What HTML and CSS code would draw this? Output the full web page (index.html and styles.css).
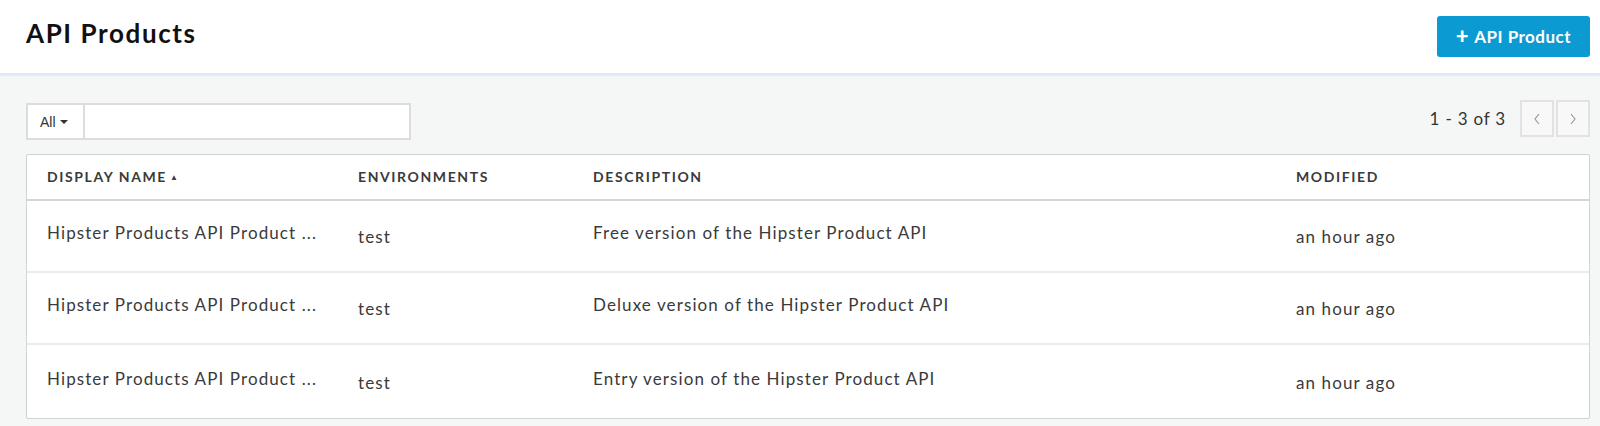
FILE: index.html
```html
<!DOCTYPE html>
<html>
<head>
<meta charset="utf-8">
<link rel="stylesheet" href="styles.css">
</head>
<body>
<header class="topbar">
  <h1 class="title">API Products</h1>
  <button class="add-btn"><span class="plus">+</span>API Product</button>
</header>
<main class="content">
  <div class="toolbar">
    <div class="filter">
      <div class="filter-select">All <span class="caret"></span></div>
      <div class="filter-input"></div>
    </div>
    <div class="pager">
      <span class="pager-text">1 - 3 of 3</span>
      <div class="pager-btns">
        <button class="pager-btn"><svg width="10" height="14" viewBox="0 0 10 14"><path d="M7 2 L3 7 L7 12" fill="none" stroke="#9a9a9a" stroke-width="1.2"/></svg></button>
        <button class="pager-btn"><svg width="10" height="14" viewBox="0 0 10 14"><path d="M3 2 L7 7 L3 12" fill="none" stroke="#9a9a9a" stroke-width="1.2"/></svg></button>
      </div>
    </div>
  </div>
  <div class="table">
    <div class="row head">
      <div class="cell">DISPLAY NAME<span class="sort">&#9650;</span></div>
      <div class="cell">ENVIRONMENTS</div>
      <div class="cell">DESCRIPTION</div>
      <div class="cell">MODIFIED</div>
    </div>
    <div class="row">
      <div class="cell">Hipster Products API Product ...</div>
      <div class="cell low">test</div>
      <div class="cell">Free version of the Hipster Product API</div>
      <div class="cell low">an hour ago</div>
    </div>
    <div class="row">
      <div class="cell">Hipster Products API Product ...</div>
      <div class="cell low">test</div>
      <div class="cell">Deluxe version of the Hipster Product API</div>
      <div class="cell low">an hour ago</div>
    </div>
    <div class="row last">
      <div class="cell">Hipster Products API Product ...</div>
      <div class="cell low">test</div>
      <div class="cell">Entry version of the Hipster Product API</div>
      <div class="cell low">an hour ago</div>
    </div>
  </div>
</main>
</body>
</html>
```
FILE: styles.css
```css
* { box-sizing: border-box; }
html, body { margin: 0; padding: 0; }
body {
  font-family: Lato, "Open Sans", sans-serif;
  color: #333;
  background: #f5f7f7;
  width: 1600px;
  height: 426px;
  overflow: hidden;
}
.topbar {
  height: 76px;
  background: #fff;
  border-bottom: 3px solid #dcebf8;
  display: flex;
  align-items: flex-start;
  justify-content: space-between;
  padding: 0 10px 0 26px;
}
.title {
  margin: 17px 0 0 0;
  font-size: 26px;
  font-weight: 700;
  letter-spacing: 1.6px;
  color: #111;
  line-height: 32px;
}
.add-btn {
  margin-top: 16px;
  width: 153px;
  height: 41px;
  border: none;
  border-radius: 3px;
  background: #0b9ad2;
  color: #fff;
  font-family: Lato, sans-serif;
  font-weight: 700;
  font-size: 17px;
  letter-spacing: 0.5px;
  padding: 0;
  display: flex;
  align-items: center;
  justify-content: center;
}
.plus { font-weight: 900; font-size: 22px; margin-right: 5px; margin-top: -3px; }
.content {
  padding: 0 10px 0 26px;
}
.toolbar {
  display: flex;
  justify-content: space-between;
  align-items: flex-start;
  height: 78px;
  padding-top: 24px;
}
.filter {
  display: flex;
  margin-top: 3px;
  height: 37px;
}
.filter-select {
  width: 59px;
  border: 2px solid #dcdcdc;
  background: #fff;
  font-family: "Liberation Sans", Arial, sans-serif;
  font-size: 14px;
  color: #333;
  display: flex;
  align-items: center;
  padding-left: 12px;
}
.caret {
  display: inline-block;
  width: 0; height: 0;
  border-left: 4px solid transparent;
  border-right: 4px solid transparent;
  border-top: 4px solid #333;
  margin-left: 4px;
}
.filter-input {
  width: 326px;
  border: 2px solid #dcdcdc;
  border-left: none;
  background: #fff;
}
.pager {
  display: flex;
  align-items: center;
  gap: 14px;
}
.pager-text {
  font-size: 17px;
  letter-spacing: 0.8px;
  color: #333;
  font-family: Lato, sans-serif;
}
.pager-btns { display: flex; gap: 2px; }
.pager-btn {
  width: 34px;
  height: 37px;
  border: 2px solid #e2e2e2;
  background: #f8f8f8;
  padding: 0;
  display: flex;
  align-items: center;
  justify-content: center;
}
.table {
  background: #fff;
  border: 1px solid #d3d3d3;
  border-radius: 2px;
  width: 1564px;
}
.row {
  display: grid;
  grid-template-columns: 311px 235px 703px 1fr;
  height: 72px;
  border-bottom: 2px solid #ebebeb;
  align-items: center;
  font-size: 17px;
  letter-spacing: 1.1px;
  color: #3a3a3a;
}
.row.last { border-bottom: none; height: 73px; }
.row.head {
  height: 46px;
  border-bottom: 2px solid #d6d6d6;
  font-size: 14px;
  font-weight: 700;
  letter-spacing: 1.6px;
  color: #3a3a3a;
}
.cell { padding-left: 20px; white-space: nowrap; }
.head .cell { padding-bottom: 1px; }
.row:not(.head) .cell { padding-bottom: 7px; }
.row:not(.head) .cell.low { padding-bottom: 0; padding-top: 1px; }
.sort { font-size: 8px; vertical-align: 2px; letter-spacing: 0; margin-left: 3px; }
```
